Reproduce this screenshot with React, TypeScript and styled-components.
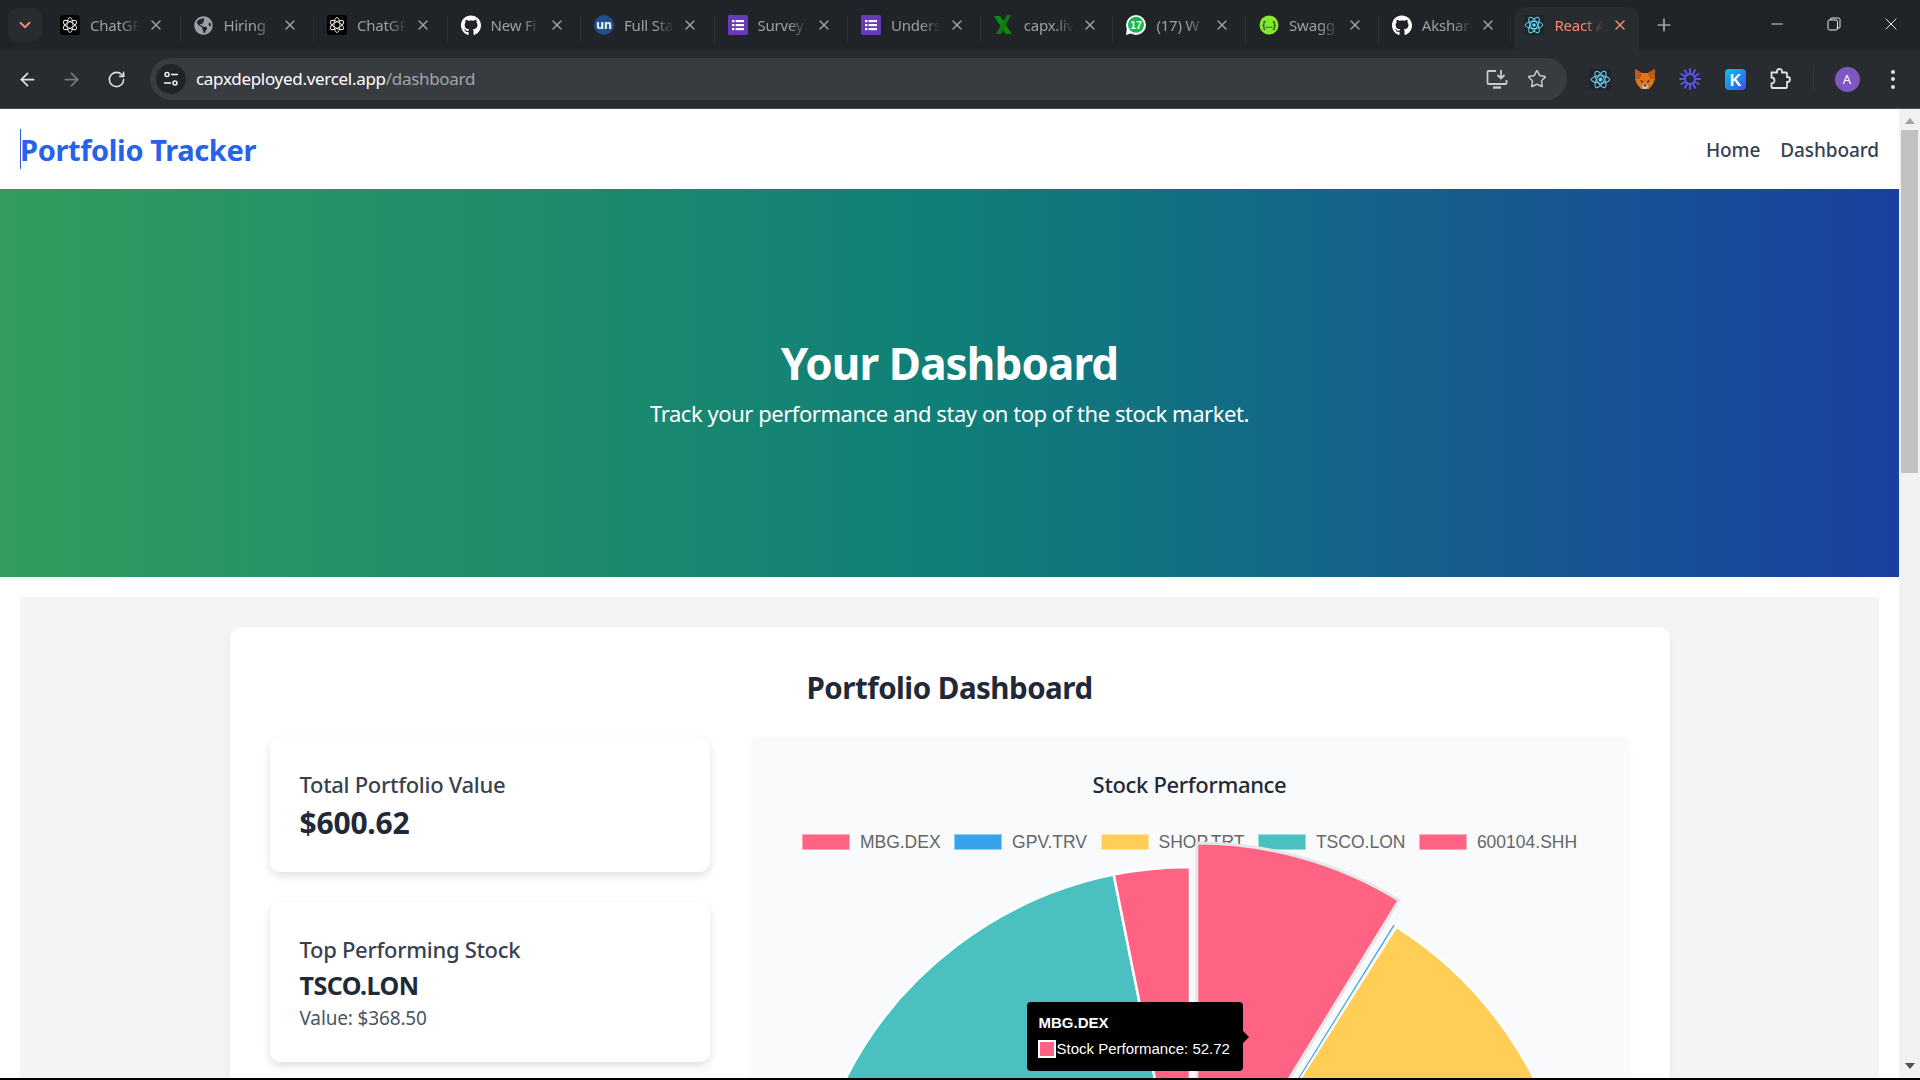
import React from "react";
import styled, { createGlobalStyle } from "styled-components";
import { FaGithub, FaGlobeAmericas } from "react-icons/fa";
import { ArrowLeft, ArrowRight, RotateCw, Star, Plus, X, Minus, ChevronDown } from "lucide-react";

const Global = createGlobalStyle`
  html, body { margin: 0; padding: 0; background: #000; overflow: hidden; }
  * { box-sizing: border-box; }
  body { font-family: "Noto Sans", "Open Sans", sans-serif; }
`;

const Screen = styled.div`
  width: 1920px; height: 1080px; display: flex; flex-direction: column; overflow: hidden; background: #000;
`;
const TabStrip = styled.div`
  height: 50px; flex: none; background: #202428; display: flex; align-items: flex-start; position: relative;
`;
const TabMenu = styled.div`
  width: 34px; height: 34px; margin: 8px 5px 0 8px; border-radius: 10px; background: #282b30;
  display: flex; align-items: center; justify-content: center; color: #f28b6b; flex: none;
`;
const Tab = styled.div<{ $active?: boolean; $width: number }>`
  width: ${(p) => p.$width}px; height: 43px; margin-top: 7px; flex: none; position: relative;
  display: flex; align-items: center; padding: 0 0 7px 13px;
  color: ${(p) => (p.$active ? "#f28b6b" : "#9aa0a6")};
  &::before {
    content: ""; position: absolute; left: 2.5px; right: 5px; top: 0; bottom: 0; z-index: 0;
    background: ${(p) => (p.$active ? "#282b30" : "transparent")}; border-radius: 12px 12px 0 0;
  }
  &::after {
    content: ""; position: absolute; right: 0; top: 9px; height: 26px; width: 1px;
    background: ${(p) => (p.$active ? "transparent" : "#2d3034")};
  }
`;
const TabIcon = styled.span`
  width: 20px; height: 20px; flex: none; display: flex; align-items: center; justify-content: center; position: relative; z-index: 1;
`;
const TabTitle = styled.span`
  width: 50px; margin-left: 10px; font-size: 15px; line-height: 20px; white-space: nowrap; position: relative; z-index: 1;
  letter-spacing: -0.2px;
  -webkit-mask-image: linear-gradient(90deg, #000 62%, transparent 100%);
  mask-image: linear-gradient(90deg, #000 62%, transparent 100%);
`;
const TabClose = styled.span`
  margin-left: 8px; width: 16px; height: 16px; display: flex; align-items: center; justify-content: center; position: relative; z-index: 1;
`;
const NewTab = styled.div`
  width: 24px; height: 24px; margin: 13px 0 0 8px; color: #a0a4a8; display: flex; align-items: center; justify-content: center;
`;
const WindowControls = styled.div`
  margin-left: auto; padding-right: 0.5px; display: flex; align-items: center; height: 48px; color: #e8eaed;
`;
const WinButton = styled.div`
  width: 57px; height: 48px; display: flex; align-items: center; justify-content: center;
`;
const Toolbar = styled.div`
  height: 59px; flex: none; background: #282b30; border-bottom: 1px solid #4c4e52; display: flex; align-items: center; padding: 0 0 0 5px;
`;
const NavButton = styled.div<{ $dim?: boolean }>`
  width: 44.5px; height: 36px; flex: none; display: flex; align-items: center; justify-content: center;
  color: ${(p) => (p.$dim ? "#75787c" : "#dfe1e5")};
`;
const Omnibox = styled.div`
  margin-left: 11px; width: 1417px; height: 42px; border-radius: 21px; background: #383b40; display: flex; align-items: center; padding-left: 6px; flex: none;
`;
const SiteInfo = styled.div`
  width: 30px; height: 30px; border-radius: 50%; background: #202428; display: flex; align-items: center; justify-content: center; flex: none;
`;
const Url = styled.div`
  margin-left: 10.5px; font-size: 17px; line-height: 24px; color: #fff; white-space: nowrap; letter-spacing: -0.3px; flex: 1;
`;
const UrlPath = styled.span`
  color: #a2a6aa;
`;
const OmniAction = styled.div`
  width: 40px; height: 30px; display: flex; align-items: center; justify-content: center; color: #c7c9cc;
`;
const OmniActions = styled.div`
  display: flex; margin-right: 10px;
`;
const Extensions = styled.div`
  display: flex; align-items: center; margin-left: 11px; gap: 0;
`;
const Ext = styled.div`
  width: 45px; height: 32px; display: flex; align-items: center; justify-content: center; color: #dfe1e5;
`;
const Divider = styled.div`
  width: 1px; height: 26px; background: #33363a; margin: 0 21px 0 10px;
`;
const Avatar = styled.div`
  width: 25px; height: 25px; border-radius: 50%; background: #7e57c2; color: #fff; font-size: 13px;
  display: flex; align-items: center; justify-content: center; flex: none;
`;
const Dots = styled.div`
  margin-left: 31px; width: 5px; display: flex; flex-direction: column; gap: 3.5px;
`;
const Dot = styled.span`
  width: 4px; height: 4px; border-radius: 50%; background: #dfe1e5;
`;
const Body = styled.div`
  height: 969px; flex: none; display: flex; background: #fff;
`;
const Page = styled.div`
  width: 1899px; overflow: hidden; background: #fff; flex: none;
`;
const Scrollbar = styled.div`
  width: 21px; background: #f1f1f1; display: flex; flex-direction: column; align-items: center; flex: none;
`;
const ArrowUp = styled.div`
  margin-top: 9px; height: 0; width: 0; border: 5px solid transparent; border-top: 0; border-bottom: 6px solid #a3a3a3; margin-bottom: 6px;
`;
const Thumb = styled.div`
  width: 17px; height: 343px; background: #c1c1c1;
`;
const ArrowDown = styled.div`
  margin-top: auto; margin-bottom: 9px; height: 0; width: 0; border: 5px solid transparent; border-bottom: 0; border-top: 6px solid #505050;
`;
const Nav = styled.nav`
  height: 80px; display: flex; align-items: center; justify-content: space-between; padding: 0 20px; background: #fff;
`;
const Brand = styled.div`
  height: 40px; border-left: 1px solid #2563eb; color: #2563eb; font-size: 29px; line-height: 42px; font-weight: 700;
  letter-spacing: -0.37px; text-indent: -1px;
`;
const NavLinks = styled.div`
  display: flex; gap: 20px; margin-top: 2px;
`;
const NavLink = styled.a`
  font-size: 19px; line-height: 28px; color: #374151; font-weight: 500; letter-spacing: -0.1px;
`;
const Hero = styled.section`
  height: 388px; background: linear-gradient(90deg, #339c5e 0%, #0f7f78 50%, #1b3fa0 100%); color: #fff;
  display: flex; flex-direction: column; align-items: center; justify-content: center; gap: 4px;
`;
const HeroTitle = styled.h1`
  margin: 0; font-size: 44px; line-height: 56px; font-weight: 700; letter-spacing: -0.9px;
`;
const HeroSub = styled.p`
  margin: 0; font-size: 22px; line-height: 36px; letter-spacing: -0.45px;
`;
const Section = styled.section`
  margin: 20px 20px 0; background: #f3f4f6; padding: 30px 0 40px;
`;
const Card = styled.div`
  width: 1440px; margin: 0 auto; background: #fff; border-radius: 12px; padding: 40px; box-shadow: 0 4px 10px rgba(0,0,0,.05);
`;
const Title = styled.h2`
  margin: 0 0 29px; text-align: center; font-size: 29.5px; line-height: 41px; font-weight: 700; color: #1f2937; letter-spacing: -0.5px;
`;
const Columns = styled.div`
  display: grid; grid-template-columns: 440px 880px; gap: 40px; align-items: start;
`;
const Stats = styled.div`
  display: flex; flex-direction: column; gap: 30px;
`;
const StatCard = styled.div`
  background: #fff; border-radius: 10px; padding: 30px; box-shadow: 0 4px 8px rgba(0,0,0,.12);
`;
const StatLabel = styled.div`
  margin: -1px 0 1px; font-size: 22px; line-height: 37.5px; color: #374151; font-weight: 500; letter-spacing: -0.29px;
`;
const StatValue = styled.div`
  margin: -1px 0 1px; font-size: 30px; line-height: 37.5px; color: #1f2937; font-weight: 700; letter-spacing: -0.2px;
`;
const StatName = styled.div`
  margin: -1px 0 2px; font-size: 25px; line-height: 32.5px; color: #1f2937; font-weight: 700; letter-spacing: -0.5px;
`;
const StatNote = styled.div`
  margin-bottom: -1px; font-size: 19px; line-height: 30px; color: #4b5563; letter-spacing: -0.15px;
`;
const ChartPanel = styled.div`
  position: relative; height: 760px; background: #f9fafb; border-radius: 10px; padding: 30px; box-shadow: 0 4px 8px rgba(0,0,0,.03);
`;
const ChartTitle = styled.h3`
  margin: -1px 0 1px; text-align: center; font-size: 22px; line-height: 37px; font-weight: 500; color: #1f2937; letter-spacing: -0.33px;
`;
const Legend = styled.div`
  margin-top: 31px; display: flex; justify-content: center; gap: 13.5px; font-family: "Liberation Sans", Arial, sans-serif;
  font-size: 17.5px; line-height: 16px; color: #666;
`;
const LegendItem = styled.div`
  display: flex; align-items: center; gap: 10px;
`;
const LegendBox = styled.span<{ $color: string }>`
  width: 48px; height: 16px; background: ${(p) => p.$color}; border: 1px solid rgba(255,255,255,.45); display: block;
`;
const Pie = styled.svg`
  position: absolute; left: 0; top: 0;
`;
const Tooltip = styled.div`
  position: absolute; left: 277px; top: 265px; width: 216px; height: 69px; background: #000; border-radius: 4px; color: #fff;
  font-family: "Liberation Sans", Arial, sans-serif; padding: 12px 12px;
  &::after {
    content: ""; position: absolute; right: -6px; top: 29px; border: 6px solid transparent; border-right: 0; border-left: 6px solid #000;
  }
`;
const TipTitle = styled.div`
  font-size: 15px; line-height: 18px; font-weight: 700;
`;
const TipRow = styled.div`
  display: flex; align-items: center; margin-top: 8px; font-size: 15px; line-height: 18px; white-space: nowrap;
`;
const TipSwatch = styled.span`
  width: 18px; height: 18px; background: #ff6384; border: 2px solid #fff; display: block; flex: none; margin: 0 1px 0 -1px;
`;
const BottomEdge = styled.div`
  height: 2px; flex: none; background: #000;
`;
const TinyText = styled.text`
  font-family: "Liberation Sans", Arial, sans-serif; font-weight: 700;
`;

const ChatGptIcon = () => (
  <svg width="20" height="20" viewBox="0 0 20 20">
    <rect width="20" height="20" rx="3" fill="#000" />
    <g fill="none" stroke="#e8e8e8" strokeWidth="0.9">
      <ellipse cx="10" cy="10" rx="3" ry="7.5" />
      <ellipse cx="10" cy="10" rx="3" ry="7.5" transform="rotate(60 10 10)" />
      <ellipse cx="10" cy="10" rx="3" ry="7.5" transform="rotate(120 10 10)" />
    </g>
  </svg>
);
const UnIcon = () => (
  <svg width="20" height="20" viewBox="0 0 20 20">
    <circle cx="10" cy="10" r="10" fill="#1d4f8c" />
    <TinyText x="10" y="14" textAnchor="middle" fontSize="12.5" fill="#fff">un</TinyText>
  </svg>
);
const FormsIcon = () => (
  <svg width="20" height="20" viewBox="0 0 20 20">
    <rect width="20" height="20" rx="1.5" fill="#673ab7" />
    <g fill="#fff">
      <rect x="4" y="5" width="2.4" height="2.2" /><rect x="7.6" y="5" width="8.4" height="2.2" />
      <rect x="4" y="9" width="2.4" height="2.2" /><rect x="7.6" y="9" width="8.4" height="2.2" />
      <rect x="4" y="13" width="2.4" height="2.2" /><rect x="7.6" y="13" width="8.4" height="2.2" />
    </g>
  </svg>
);
const SheetXIcon = () => (
  <svg width="20" height="20" viewBox="0 0 20 20">
    <polygon points="0,1 6,1 18,19 11.5,19" fill="#0b8a0b" />
    <polygon points="13,0 17,0 7,19 2,19" fill="#0f7a12" />
  </svg>
);
const WhatsIcon = () => (
  <svg width="20" height="20" viewBox="0 0 20 20">
    <circle cx="10" cy="10" r="10" fill="#fff" />
    <polygon points="0,20 1,13 6,18" fill="#fff" />
    <circle cx="10" cy="9.8" r="8" fill="#17b84a" />
    <TinyText x="10" y="13.6" textAnchor="middle" fontSize="10.5" fill="#fff">17</TinyText>
  </svg>
);
const SwaggerIcon = () => (
  <svg width="20" height="20" viewBox="0 0 20 20">
    <circle cx="10" cy="10" r="9.5" fill="#85ea2d" />
    <TinyText x="10" y="13" textAnchor="middle" fontSize="8.5" fill="#173647">{"{...}"}</TinyText>
  </svg>
);
const ReactIcon = ({ size = 20 }: { size?: number }) => (
  <svg width={size} height={size} viewBox="0 0 20 20">
    <rect width="20" height="20" rx="1" fill="#20232a" />
    <g fill="none" stroke="#61dafb" strokeWidth="1">
      <ellipse cx="10" cy="10" rx="8.8" ry="3.5" />
      <ellipse cx="10" cy="10" rx="8.8" ry="3.5" transform="rotate(60 10 10)" />
      <ellipse cx="10" cy="10" rx="8.8" ry="3.5" transform="rotate(120 10 10)" />
    </g>
    <circle cx="10" cy="10" r="1.8" fill="#61dafb" />
  </svg>
);
const InstallIcon = () => (
  <svg width="22" height="22" viewBox="0 0 22 22" fill="none" stroke="#c7c9cc" strokeWidth="1.8">
    <path d="M10 3H2.500a1 1 0 0 0-1 1v11a1 1 0 0 0 1 1h17a1 1 0 0 0 1-1v-3" />
    <path d="M7 19.500h8" strokeWidth="2.4" />
    <path d="M15 2v8M11.500 7l3.500 3.500L18.500 7" />
  </svg>
);
const FoxIcon = () => (
  <svg width="22" height="22" viewBox="0 0 22 22">
    <polygon points="1,1 8,5 14,5 21,1 21,11 19,16 15,21 7,21 3,16 1,11" fill="#e2761b" />
    <polygon points="1,1 8,5 6,11 1,11" fill="#b85c17" />
    <polygon points="21,1 14,5 16,11 21,11" fill="#b85c17" />
    <polygon points="6,12 9.500,13 8,15" fill="#233447" />
    <polygon points="16,12 12.500,13 14,15" fill="#233447" />
    <polygon points="8,17 14,17 13,21 9,21" fill="#d7c1b3" />
    <polygon points="9.500,17 12.500,17 11,19" fill="#161616" />
  </svg>
);
const SunIcon = () => (
  <svg width="22" height="22" viewBox="0 0 22 22">
    <g stroke="#5a55f2" strokeWidth="1.9" strokeLinecap="round">
      {Array.from({ length: 12 }).map((_, i) => (
        <line key={i} x1="11" y1="1" x2="11" y2="6" transform={`rotate(${i * 30} 11 11)`} />
      ))}
    </g>
    <circle cx="11" cy="11" r="5" fill="none" stroke="#5a55f2" strokeWidth="1.8" />
  </svg>
);
const KIcon = () => (
  <svg width="21" height="21" viewBox="0 0 21 21">
    <defs>
      <linearGradient id="kg" x1="0" y1="0" x2="1" y2="1">
        <stop offset="0" stopColor="#0ac2f2" />
        <stop offset="1" stopColor="#3a4ff0" />
      </linearGradient>
    </defs>
    <rect width="21" height="21" rx="4" fill="url(#kg)" />
    <TinyText x="10.5" y="16.5" textAnchor="middle" fontSize="16" fill="#fff">K</TinyText>
  </svg>
);
const PuzzleIcon = () => (
  <svg width="22" height="22" viewBox="0 0 22 22" fill="none" stroke="#dfe1e5" strokeWidth="1.8">
    <path d="M2.500 4.500H8V3.500a2.500 2.500 0 0 1 5 0V4.500H17a1 1 0 0 1 1 1V9h.5a2.500 2.500 0 0 1 0 5H18v5a1 1 0 0 1-1 1H3.500a1 1 0 0 1-1-1V15.500a3 3 0 0 0 0-6Z" />
  </svg>
);
const TuneIcon = () => (
  <svg width="18" height="18" viewBox="0 0 18 18" fill="none" stroke="#e8eaed" strokeWidth="1.6">
    <circle cx="5" cy="4.500" r="2" />
    <path d="M9 4.500h7" />
    <path d="M2 13h7" />
    <circle cx="13" cy="13" r="2" />
  </svg>
);
const RestoreIcon = () => (
  <svg width="14" height="14" viewBox="0 0 14 14" fill="none" stroke="#e8eaed" strokeWidth="1">
    <rect x="1" y="3" width="9.500" height="10" rx="1.500" />
    <path d="M3.500 3V2a1 1 0 0 1 1-1h7a1.500 1.500 0 0 1 1.500 1.500V10a1 1 0 0 1-1 1h-2.500" />
  </svg>
);

const tabs: { icon: React.ReactNode; title: string }[] = [
  { icon: <ChatGptIcon />, title: "ChatGP" },
  { icon: <FaGlobeAmericas size={19} color="#9aa0a6" />, title: "Hiring" },
  { icon: <ChatGptIcon />, title: "ChatGP" },
  { icon: <FaGithub size={21} color="#fff" />, title: "New Fi" },
  { icon: <UnIcon />, title: "Full Sta" },
  { icon: <FormsIcon />, title: "Survey" },
  { icon: <FormsIcon />, title: "Unders" },
  { icon: <SheetXIcon />, title: "capx.liv" },
  { icon: <WhatsIcon />, title: "(17) W" },
  { icon: <SwaggerIcon />, title: "Swagg" },
  { icon: <FaGithub size={21} color="#fff" />, title: "Akshar" },
  { icon: <ReactIcon />, title: "React A" },
];

const legend = [
  { label: "MBG.DEX", color: "#ff6384" },
  { label: "GPV.TRV", color: "#36a2eb" },
  { label: "SHOP.TRT", color: "#ffce56" },
  { label: "TSCO.LON", color: "#4bc0c0" },
  { label: "600104.SHH", color: "#ff6384" },
];

const R = 386;
const CX = 440;
const CY = 516;
function slice(from: number, to: number, ox = 0, oy = 0) {
  const p = (d: number) => {
    const a = (d * Math.PI) / 180;
    return `${(CX + ox + R * Math.sin(a)).toFixed(2)} ${(CY + oy - R * Math.cos(a)).toFixed(2)}`;
  };
  const large = to - from > 180 ? 1 : 0;
  return `M${CX + ox} ${CY + oy}L${p(from)}A${R} ${R} 0 ${large} 1 ${p(to)}Z`;
}

export default function App() {
  return (
    <Screen>
      <Global />
      <TabStrip>
        <TabMenu><ChevronDown size={18} strokeWidth={2.6} /></TabMenu>
        {tabs.map((t, i) => {
          const active = i === tabs.length - 1;
          return (
            <Tab key={i} $active={active} $width={i < 6 ? 133.5 : 132.7}>
              <TabIcon>{t.icon}</TabIcon>
              <TabTitle>{t.title}</TabTitle>
              <TabClose><X size={16} strokeWidth={2.2} /></TabClose>
            </Tab>
          );
        })}
        <NewTab><Plus size={20} strokeWidth={2} /></NewTab>
        <WindowControls>
          <WinButton><Minus size={18} strokeWidth={1.2} /></WinButton>
          <WinButton><RestoreIcon /></WinButton>
          <WinButton><X size={20} strokeWidth={1.2} /></WinButton>
        </WindowControls>
      </TabStrip>
      <Toolbar>
        <NavButton><ArrowLeft size={21} strokeWidth={2} /></NavButton>
        <NavButton $dim><ArrowRight size={21} strokeWidth={2} /></NavButton>
        <NavButton><RotateCw size={19} strokeWidth={2} /></NavButton>
        <Omnibox>
          <SiteInfo><TuneIcon /></SiteInfo>
          <Url>capxdeployed.vercel.app<UrlPath>/dashboard</UrlPath></Url>
          <OmniActions>
            <OmniAction><InstallIcon /></OmniAction>
            <OmniAction><Star size={20} strokeWidth={1.8} /></OmniAction>
          </OmniActions>
        </Omnibox>
        <Extensions>
          <Ext><ReactIcon size={21} /></Ext>
          <Ext><FoxIcon /></Ext>
          <Ext><SunIcon /></Ext>
          <Ext><KIcon /></Ext>
          <Ext><PuzzleIcon /></Ext>
          <Divider />
          <Avatar>A</Avatar>
          <Dots><Dot /><Dot /><Dot /></Dots>
        </Extensions>
      </Toolbar>
      <Body>
        <Page>
          <Nav>
            <Brand>Portfolio Tracker</Brand>
            <NavLinks>
              <NavLink>Home</NavLink>
              <NavLink>Dashboard</NavLink>
            </NavLinks>
          </Nav>
          <Hero>
            <HeroTitle>Your Dashboard</HeroTitle>
            <HeroSub>Track your performance and stay on top of the stock market.</HeroSub>
          </Hero>
          <Section>
            <Card>
              <Title>Portfolio Dashboard</Title>
              <Columns>
                <Stats>
                  <StatCard>
                    <StatLabel>Total Portfolio Value</StatLabel>
                    <StatValue>$600.62</StatValue>
                  </StatCard>
                  <StatCard>
                    <StatLabel>Top Performing Stock</StatLabel>
                    <StatName>TSCO.LON</StatName>
                    <StatNote>Value: $368.50</StatNote>
                  </StatCard>
                </Stats>
                <ChartPanel>
                  <ChartTitle>Stock Performance</ChartTitle>
                  <Legend>
                    {legend.map((l) => (
                      <LegendItem key={l.label}>
                        <LegendBox $color={l.color} />
                        {l.label}
                      </LegendItem>
                    ))}
                  </Legend>
                  <Pie width="880" height="720" viewBox="0 0 880 720">
                    <g stroke="#fff" strokeWidth="2.5" strokeLinejoin="round">
                      <path d={slice(32.3, 127.7)} fill="#ffce56" />
                      <path d={slice(127.7, 348.6)} fill="#4bc0c0" />
                      <path d={slice(348.6, 360)} fill="#ff6384" />
                    </g>
                    <path d={slice(31.85, 31.95)} fill="#36a2eb" stroke="#36a2eb" strokeWidth="0.7" />
                    <path d={slice(0, 31.6, 6.8, -24)} fill="#ff6384" stroke="#e6e6e6" strokeWidth="3" strokeLinejoin="round" />
                  </Pie>
                  <Tooltip>
                    <TipTitle>MBG.DEX</TipTitle>
                    <TipRow><TipSwatch />Stock Performance: 52.72</TipRow>
                  </Tooltip>
                </ChartPanel>
              </Columns>
            </Card>
          </Section>
        </Page>
        <Scrollbar>
          <ArrowUp />
          <Thumb />
          <ArrowDown />
        </Scrollbar>
      </Body>
      <BottomEdge />
    </Screen>
  );
}
